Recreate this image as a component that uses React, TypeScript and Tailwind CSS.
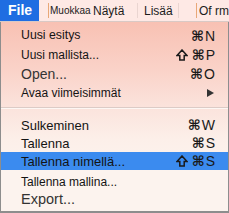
import React from "react";

const F = { fontFamily: '"Liberation Sans", Arial, sans-serif' };

function Cmd() {
  return <span className="font-['DejaVu_Sans',sans-serif] text-[14px] font-bold mr-[1px]">⌘</span>;
}
function Shift() {
  return (
    <svg width="12" height="12" viewBox="0 0 12 12" className="mr-[4px]">
      <path d="M6 1 L11 6.5 H8.2 V11 H3.8 V6.5 H1 Z" fill="none" stroke="#1a1a1a" strokeWidth="1.5" strokeLinejoin="miter" />
    </svg>
  );
}

function Row({
  h,
  label,
  size,
  color = "text-[#141414]",
  right,
  active = false,
}: {
  h: string;
  label: string;
  size: string;
  color?: string;
  right?: React.ReactNode;
  active?: boolean;
}) {
  return (
    <div className={`${h} flex items-center justify-between pl-[20px] pr-[13px] ${active ? "bg-[#3b8bef]" : ""}`}>
      <span className={`${size} ${color} leading-none whitespace-nowrap`}>{label}</span>
      {right ? <span className="flex items-center text-[14px] text-[#1a1a1a] leading-none">{right}</span> : null}
    </div>
  );
}

export default function App() {
  return (
    <div
      className="w-[229px] h-[213px] overflow-hidden flex flex-col font-['Liberation_Sans',Arial,sans-serif]"
      style={F}
    >
      {/* menu bar */}
      <div className="h-[22px] flex items-stretch bg-[#fee9e5] border-b border-[#d9c9c5] text-[#1c1c1c] overflow-hidden whitespace-nowrap">
        <div className="w-[39px] bg-[#1f6de2] text-white text-[14px] font-bold flex items-center pl-[8px]">File</div>
        <div className="w-[9px]" />
        <div className="w-[1px] my-[3px] bg-[#e8a878]" />
        <div className="w-[1px]" />
        <div className="w-[43px] flex items-center text-[10px]">Muokkaa</div>
        <div className="w-[44px] flex items-center text-[12px]">Näytä</div>
        <div className="w-[1px] my-[3px] bg-[#ead5d1]" />
        <div className="w-[6px]" />
        <div className="w-[34px] flex items-center text-[12px]">Lisää</div>
        <div className="w-[1px] my-[3px] bg-[#ead5d1]" />
        <div className="w-[17px]" />
        <div className="w-[1px] my-[3px] bg-[#e8a878]" />
        <div className="w-[2px]" />
        <div className="flex items-center text-[12px]">Of rm</div>
      </div>

      {/* dropdown */}
      <div className="flex-1 flex flex-col border-l border-r border-b-2 border-[#8d8d8d] bg-[linear-gradient(180deg,#f8c1b3_0%,#fad2c8_25%,#fbe3dc_45%,#fcefe9_62%,#fcf3ee_78%,#fcf3ee_100%)] pt-[4px]">
        <Row h="h-[19px]" label="Uusi esitys" size="text-[12.3px]" right={<><Cmd />N</>} />
        <Row h="h-[19px]" label="Uusi mallista..." size="text-[12px]" right={<><Shift /><Cmd />P</>} />
        <Row h="h-[19px]" label="Open..." size="text-[14px]" color="text-[#333333]" right={<><Cmd />O</>} />
        <div className="h-[20px] flex items-center justify-between pl-[20px] pr-[14px]">
          <span className="text-[12px] text-[#141414] leading-none whitespace-nowrap">Avaa viimeisimmät</span>
          <svg width="7" height="8" viewBox="0 0 7 8">
            <path d="M0 0 L7 4 L0 8 Z" fill="#333333" />
          </svg>
        </div>
        <div className="h-[13px] pt-[4px]">
          <div className="h-[1px] bg-[#dccbc6]" />
          <div className="h-[1px] bg-[#fdf7f4]" />
        </div>
        <Row h="h-[18px]" label="Sulkeminen" size="text-[13px]" right={<><Cmd />W</>} />
        <Row h="h-[18px]" label="Tallenna" size="text-[13px]" right={<><Cmd />S</>} />
        <Row h="h-[18px]" label="Tallenna nimellä..." size="text-[13px]" active right={<><Shift /><Cmd />S</>} />
        <Row h="h-[23px]" label="Tallenna mallina..." size="text-[12px]" />
        <Row h="h-[13px]" label="Export..." size="text-[14.5px]" color="text-[#333333]" />
      </div>
    </div>
  );
}
